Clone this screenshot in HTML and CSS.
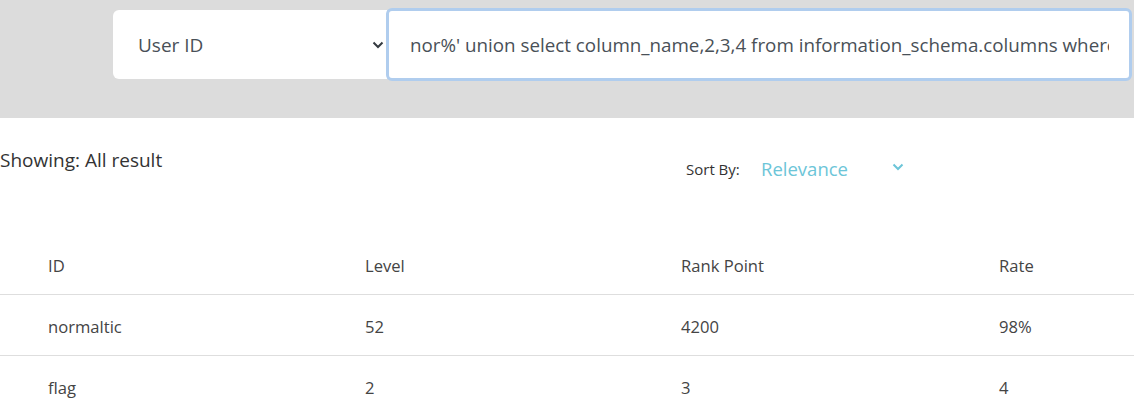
FILE: index.html
```html
<!DOCTYPE html>
<html>
<head>
<meta charset="utf-8">
<link rel="stylesheet" href="styles.css">
</head>
<body>
<div class="search-band">
  <div class="search-group">
    <div class="select-box">
      <span>User ID</span>
      <svg class="chev" width="12" height="8" viewBox="0 0 12 8"><path d="M1.5 1.5 L6 6 L10.5 1.5" fill="none" stroke="#343a40" stroke-width="2"/></svg>
    </div>
    <div class="input-box">
      <span class="input-text">nor%' union select column_name,2,3,4 from information_schema.columns where table_name='flag</span>
    </div>
  </div>
</div>
<div class="toolbar">
  <div class="showing">Showing: All result</div>
  <div class="sort">
    <span class="sort-label">Sort By:</span>
    <span class="sort-value">Relevance</span>
    <svg class="sort-chev" width="12" height="8" viewBox="0 0 12 8"><path d="M1.5 1.5 L6 6 L10.5 1.5" fill="none" stroke="#6cc5d8" stroke-width="2"/></svg>
  </div>
</div>
<table class="results">
  <thead>
    <tr><th class="c1">ID</th><th class="c2">Level</th><th class="c3">Rank Point</th><th class="c4">Rate</th></tr>
  </thead>
  <tbody>
    <tr><td>normaltic</td><td>52</td><td>4200</td><td>98%</td></tr>
    <tr><td>flag</td><td>2</td><td>3</td><td>4</td></tr>
  </tbody>
</table>
</body>
</html>
```
FILE: styles.css
```css
* { box-sizing: border-box; }
html, body { margin: 0; padding: 0; background: #fff; }
body {
  font-family: "Open Sans", "Noto Sans", sans-serif;
  color: #333;
  overflow: hidden;
}
.search-band {
  background: #dcdcdc;
  height: 118px;
  padding: 8px 2px 0 113px;
}
.search-group {
  display: flex;
  align-items: center;
  height: 73px;
}
.select-box {
  width: 274px;
  height: 69px;
  background: #fff;
  border-radius: 6px 0 0 6px;
  display: flex;
  align-items: center;
  justify-content: space-between;
  padding: 0 3px 0 25px;
  font-size: 19px;
  color: #495057;
}
.chev { margin-top: 1px; }
.input-box {
  flex: 1;
  height: 73px;
  background: #fff;
  border: 3px solid #b0cdee;
  border-radius: 6px;
  display: flex;
  align-items: center;
  padding: 0 20px 0 21px;
  overflow: hidden;
  font-size: 18.8px;
  color: #495057;
  white-space: nowrap;
  margin-left: -1px;
}
.input-text { overflow: hidden; display: block; }
.toolbar {
  display: flex;
  align-items: flex-start;
  padding-top: 28px;
}
.showing {
  font-size: 19px;
  color: #333;
  width: 686px;
  line-height: 28px;
}
.sort {
  display: flex;
  align-items: center;
  padding-top: 10px;
}
.sort-label { font-size: 15px; color: #333; width: 75px; }
.sort-value { font-size: 18.5px; color: #6cc5d8; width: 131px; }
.sort-chev { margin-top: -4px; }
.results {
  width: 100%;
  border-collapse: collapse;
  margin-top: 53px;
  font-size: 16.6px;
  color: #444;
}
.results th, .results td {
  text-align: left;
  font-weight: normal;
  padding: 4px 0 0 48px;
  height: 61px;
}
.results thead th { height: 60px; }
.results tbody tr { border-top: 1px solid #dedede; }
.results .c1 { width: 317px; }
.results .c2 { width: 316px; }
.results .c3 { width: 318px; }
```
